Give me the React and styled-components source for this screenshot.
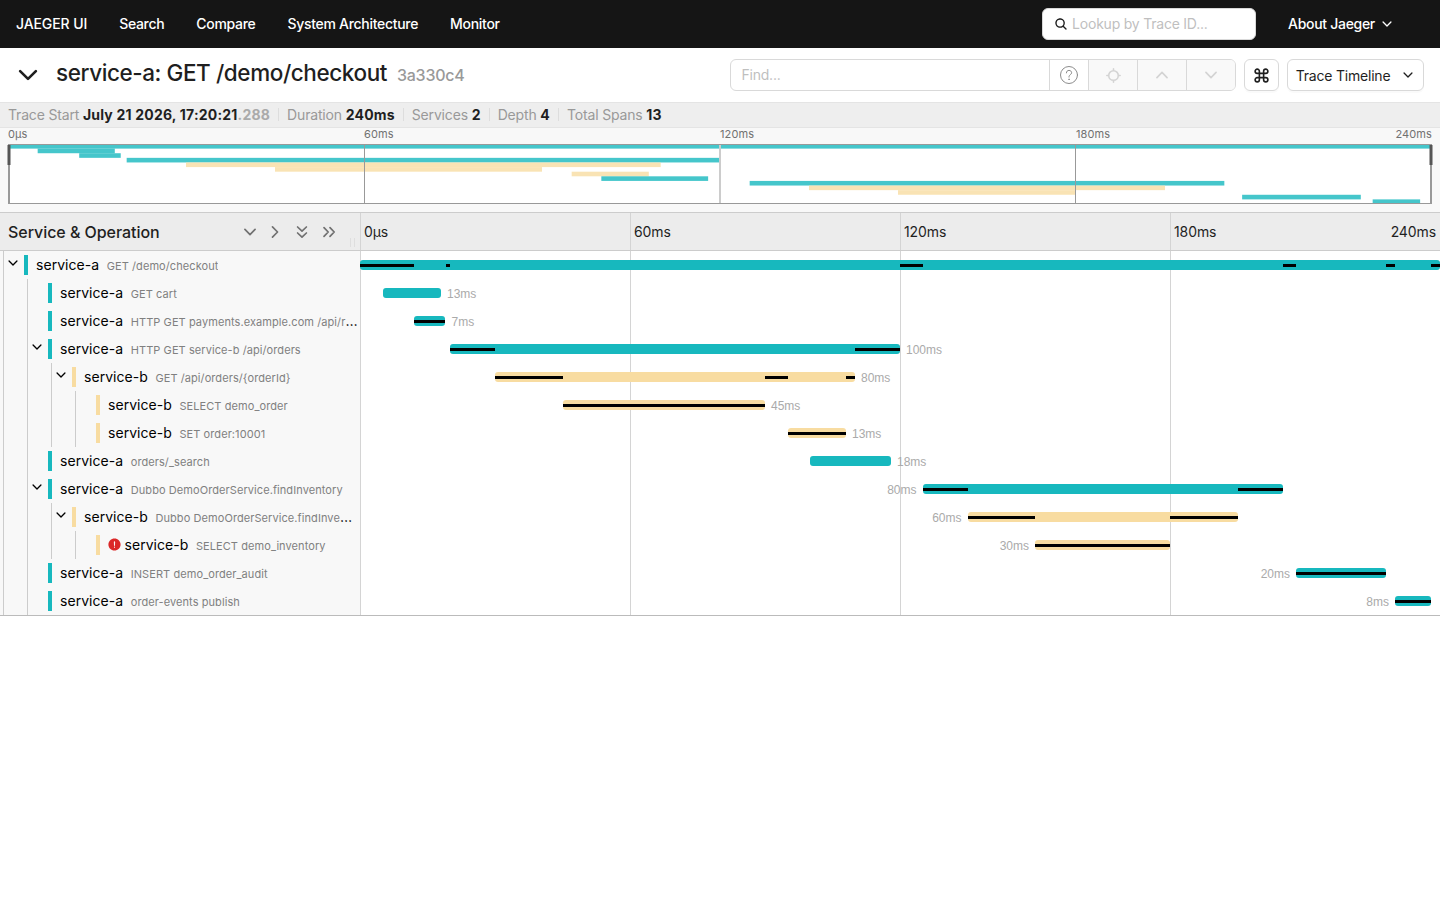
import React from "react";
import styled, { createGlobalStyle } from "styled-components";
import {
  IoAlertCircle,
  IoChevronDown,
  IoChevronForward,
  IoChevronUp,
  IoLocate,
  IoSearch,
} from "react-icons/io5";

const TOTAL = 240;
const TEAL = "#17b8be";
const SAND = "#f8dca1";

const spans = [
  { depth: 0, service: "service-a", op: "GET /demo/checkout", start: 0, end: 240, open: true, critical: [[0, 12], [19, 20], [120, 125], [205, 208], [228, 230], [238, 240]] },
  { depth: 1, service: "service-a", op: "GET cart", start: 5, end: 18, critical: [] },
  { depth: 1, service: "service-a", op: "HTTP GET payments.example.com /api/risk/check", start: 12, end: 19, critical: [[12, 19]] },
  { depth: 1, service: "service-a", op: "HTTP GET service-b /api/orders", start: 20, end: 120, open: true, critical: [[20, 30], [110, 120]] },
  { depth: 2, service: "service-b", op: "GET /api/orders/{orderId}", start: 30, end: 110, open: true, critical: [[30, 45], [90, 95], [108, 110]] },
  { depth: 3, service: "service-b", op: "SELECT demo_order", start: 45, end: 90, critical: [[45, 90]] },
  { depth: 3, service: "service-b", op: "SET order:10001", start: 95, end: 108, critical: [[95, 108]] },
  { depth: 1, service: "service-a", op: "orders/_search", start: 100, end: 118, critical: [] },
  { depth: 1, service: "service-a", op: "Dubbo DemoOrderService.findInventory", start: 125, end: 205, open: true, critical: [[125, 135], [195, 205]] },
  { depth: 2, service: "service-b", op: "Dubbo DemoOrderService.findInventory", start: 135, end: 195, open: true, critical: [[135, 150], [180, 195]] },
  { depth: 3, service: "service-b", op: "SELECT demo_inventory", start: 150, end: 180, error: true, critical: [[150, 180]] },
  { depth: 1, service: "service-a", op: "INSERT demo_order_audit", start: 208, end: 228, critical: [[208, 228]] },
  { depth: 1, service: "service-a", op: "order-events publish", start: 230, end: 238, critical: [[230, 238]] },
];

const colorOf = (span) => (span.service === "service-a" ? TEAL : SAND);
const pct = (ms) => `${(ms / TOTAL) * 100}%`;

const GlobalStyle = createGlobalStyle`
  * {
    box-sizing: border-box;
  }
  body {
    margin: 0;
    background: #fff;
    color: #1f1f1f;
    font-family: Inter, "Liberation Sans", sans-serif;
    font-size: 14px;
  }
  svg {
    display: block;
    flex: none;
  }
`;

const Nav = styled.nav`
  display: flex;
  align-items: center;
  height: 48px;
  padding: 0 46px 0 16px;
  gap: 32px;
  background: #151515;
  color: #fff;
  font-weight: 500;
`;

const NavItem = styled.span`
  display: flex;
  align-items: center;
  gap: 5px;
  padding-bottom: 1px;
  letter-spacing: ${(p) => (p.$brand ? -0.1 : -0.3)}px;
  white-space: nowrap;
`;

const Lookup = styled.div`
  display: flex;
  align-items: center;
  gap: 4px;
  width: 214px;
  height: 32px;
  margin-left: auto;
  padding: 0 11px;
  border: 1px solid #d9d9d9;
  border-radius: 6px;
  background: #fff;
  color: #1f1f1f;
`;

const Placeholder = styled.span`
  padding-bottom: 1px;
  color: #bfbfbf;
  font-weight: 400;
  letter-spacing: -0.22px;
`;

const TitleBar = styled.header`
  display: flex;
  align-items: center;
  height: 54px;
  padding: 0 16px 0 14px;
`;

const Title = styled.h1`
  display: flex;
  align-items: baseline;
  gap: 10px;
  flex: 1;
  margin: 0 0 2px 14px;
  font-size: 22.5px;
  line-height: 32px;
  font-weight: 500;
  letter-spacing: -0.42px;
`;

const TraceId = styled.small`
  color: #999;
  font-size: 16px;
  letter-spacing: -0.25px;
`;

const FindGroup = styled.div`
  display: flex;
  height: 32px;
  border: 1px solid #d9d9d9;
  border-radius: 6px;
  overflow: hidden;
`;

const FindInput = styled.div`
  display: flex;
  align-items: center;
  width: 318px;
  padding-left: 10.5px;
`;

const FindCell = styled.div`
  display: flex;
  align-items: center;
  justify-content: center;
  width: ${(p) => p.$width}px;
  border-left: 1px solid #d9d9d9;
  background: ${(p) => (p.$disabled ? "#f9f9f9" : "#fff")};
  color: ${(p) => (p.$disabled ? "#d4d4d4" : "#8c8c8c")};
`;

const Button = styled.div`
  display: flex;
  align-items: center;
  justify-content: center;
  gap: 11px;
  width: ${(p) => p.$width}px;
  height: 32px;
  margin-left: 8px;
  border: 1px solid #d9d9d9;
  border-radius: 6px;
  box-shadow: 0 2px 0 rgba(0, 0, 0, 0.02);
  letter-spacing: -0.2px;
  white-space: nowrap;
`;

const Summary = styled.div`
  display: flex;
  align-items: center;
  height: 26px;
  padding: 0 8px 1px;
  border-top: 1px solid #e4e4e4;
  border-bottom: 1px solid #e4e4e4;
  background: #eee;
  color: #999;
`;

const Fact = styled.div`
  display: flex;
  align-items: center;
  height: 13px;
  line-height: 13px;
  letter-spacing: -0.17px;
  white-space: pre;

  & + & {
    margin-left: 8px;
    padding-left: 8px;
    border-left: 1px solid #ddd;
  }

  b {
    color: #1f1f1f;
    font-weight: 700;
    letter-spacing: 0.2px;
  }
  i {
    color: #aaa;
    font-style: normal;
  }
`;

const Overview = styled.section`
  height: 84px;
  padding: 0 8px;
  background: #f8f8f8;
`;

const OverviewTicks = styled.div`
  display: grid;
  grid-template-columns: repeat(4, 1fr);
  height: 16px;
  color: #717171;
  font-size: 11px;
  line-height: 13px;
  letter-spacing: 0.1px;
`;

const OverviewTick = styled.span`
  display: flex;
  justify-content: space-between;
`;

const TimelineHeader = styled.div`
  display: grid;
  grid-template-columns: 360px 1fr;
  height: 39px;
  border-top: 1px solid #ccc;
  border-bottom: 1px solid #ccc;
  background: #ececec;
`;

const ColumnTitle = styled.div`
  display: flex;
  align-items: center;
  padding: 0 5px 0 8px;
  font-size: 16px;
  font-weight: 500;
  letter-spacing: -0.05px;
`;

const Collapsers = styled.div`
  display: flex;
  gap: 9px;
  margin: 0 12px 0 auto;
  color: #717171;

  svg:first-child {
    margin-right: -2px;
  }
`;

const Resizer = styled.div`
  align-self: flex-end;
  width: 5px;
  height: 9px;
  margin-bottom: 3px;
  border: solid #dedede;
  border-width: 0 1px;
`;

const Ticks = styled.div`
  display: grid;
  grid-template-columns: repeat(4, 1fr);
`;

const Tick = styled.div`
  display: flex;
  align-items: center;
  justify-content: space-between;
  padding: 0 4px 0 3px;
  border-left: 1px solid #d4d4d4;
  letter-spacing: -0.1px;
`;

const Rows = styled.div`
  border-bottom: 1px solid #bbb;
`;

const Row = styled.div`
  display: grid;
  grid-template-columns: 360px 1fr;
  height: 28px;
`;

const NameCell = styled.div`
  display: flex;
  min-width: 0;
  padding: 0 2px 0 3px;
  background: #f8f8f8;
`;

const Guide = styled.div`
  flex: none;
  width: ${(p) => (p.$last ? 21 : 24)}px;
  padding: 5px 0 0 2px;
  border-left: 1px solid #ccc;
  color: #000;
`;

const NameText = styled.div`
  flex: 0 1 auto;
  min-width: 0;
  height: 20px;
  margin-top: 4px;
  padding-left: 8px;
  border-left: 4px solid ${(p) => p.$color};
  overflow: hidden;
  text-overflow: ellipsis;
  white-space: nowrap;
  color: #000;
  font-size: 14px;
  line-height: 20px;
  letter-spacing: 0.05px;

  small {
    margin-left: 7.5px;
    color: #808080;
    font-size: 11px;
    letter-spacing: 0.08px;
  }
`;

const ErrorIcon = styled(IoAlertCircle)`
  display: inline-block;
  margin: 0 3px 0 -1.5px;
  vertical-align: -1.5px;
  color: #db2828;
`;

const Track = styled.div`
  display: grid;
  grid-template-columns: repeat(4, 1fr);
  position: relative;
`;

const TrackCell = styled.div`
  border-left: 1px solid #d4d4d4;
`;

const Bar = styled.div`
  position: absolute;
  top: 9px;
  height: 10px;
  border-radius: 3px;
  background: ${(p) => p.$color};
`;

const Critical = styled.div`
  position: absolute;
  top: 13px;
  height: 3px;
  background: #000;
`;

const Duration = styled.span`
  position: absolute;
  top: -1px;
  ${(p) => (p.$before ? "right" : "left")}: calc(100% + 6px);
  color: #aaa;
  font-family: "Liberation Sans", sans-serif;
  font-size: 12px;
  line-height: 14px;
`;

const HelpIcon = () => (
  <svg width="18" height="18" fill="none" stroke="currentColor" strokeLinecap="round">
    <circle cx="9" cy="9" r="8.5" />
    <path d="M6.4 6.9c0-1.6 1.1-2.5 2.6-2.5s2.6 1 2.6 2.3c0 2-2.6 2.1-2.6 4v.4" />
    <circle cx="9" cy="13.3" r="0.3" />
  </svg>
);

const CommandIcon = () => (
  <svg width="17" height="17" viewBox="0 0 24 24" fill="none" stroke="currentColor" strokeWidth="2.3">
    <path d="M15 6v12a3 3 0 1 0 3-3H6a3 3 0 1 0 3 3V6a3 3 0 1 0-3 3h12a3 3 0 1 0-3-3" />
  </svg>
);

// points down by default, right when turned
const DoubleChevron = ({ turned }) => (
  <svg width="18" height="18" fill="none" stroke="currentColor" strokeWidth="1.7" strokeLinecap="round" strokeLinejoin="round">
    <path
      d="M4.6 4l4.4 4.2L13.4 4M4.6 10l4.4 4.2 4.4-4.2"
      transform={turned ? "rotate(-90 9 9)" : undefined}
    />
  </svg>
);

const Minimap = () => (
  <svg width="1424" height="60" overflow="visible">
    <rect width="1424" height="60" fill="#fff" />
    {spans.map((s, i) => (
      <rect
        key={i}
        x={(s.start / TOTAL) * 1424}
        y={(i * 60) / 13}
        width={((s.end - s.start) / TOTAL) * 1424}
        height={60 / 13}
        fill={colorOf(s)}
        opacity="0.8"
      />
    ))}
    <path d="M356.5 0V60M1067.5 0V60" stroke="#999" />
    <path d="M712 0V60" stroke="#ccc" strokeWidth="2" />
    <path d="M0 0.5H1424M0 59.5H1424" stroke="#999" />
    <path d="M1 0V60M1423 0V60" stroke="#999" strokeWidth="2" />
    <path d="M1 1V21M1423 1V21" stroke="#555" strokeWidth="3" />
  </svg>
);

const SpanRow = ({ span }) => {
  const { depth, service, op, start, end, open, error, critical } = span;
  const before = start > TOTAL - end;

  return (
    <Row>
      <NameCell>
        {Array.from({ length: depth + 1 }, (_, i) => (
          <Guide key={i} $last={i === depth}>
            {i === depth && open && <IoChevronDown size={14} />}
          </Guide>
        ))}
        <NameText $color={colorOf(span)}>
          {error && <ErrorIcon size={15} />}
          {service}
          <small>{op}</small>
        </NameText>
      </NameCell>
      <Track>
        <TrackCell />
        <TrackCell />
        <TrackCell />
        <TrackCell />
        <Bar $color={colorOf(span)} style={{ left: pct(start), width: pct(end - start) }}>
          {depth > 0 && <Duration $before={before}>{end - start}ms</Duration>}
        </Bar>
        {critical.map(([from, to]) => (
          <Critical key={from} style={{ left: pct(from), width: pct(to - from) }} />
        ))}
      </Track>
    </Row>
  );
};

const App = () => (
  <>
    <GlobalStyle />
    <Nav>
      <NavItem $brand>JAEGER UI</NavItem>
      <NavItem>Search</NavItem>
      <NavItem>Compare</NavItem>
      <NavItem>System Architecture</NavItem>
      <NavItem>Monitor</NavItem>
      <Lookup>
        <IoSearch size={14} />
        <Placeholder>Lookup by Trace ID...</Placeholder>
      </Lookup>
      <NavItem>
        About Jaeger <IoChevronDown size={14} />
      </NavItem>
    </Nav>
    <TitleBar>
      <IoChevronDown size={28} />
      <Title>
        service-a: GET /demo/checkout <TraceId>3a330c4</TraceId>
      </Title>
      <FindGroup>
        <FindInput>
          <Placeholder>Find...</Placeholder>
        </FindInput>
        <FindCell $width={39}>
          <HelpIcon />
        </FindCell>
        <FindCell $width={49} $disabled>
          <IoLocate size={17} />
        </FindCell>
        <FindCell $width={49} $disabled>
          <IoChevronUp size={18} />
        </FindCell>
        <FindCell $width={49} $disabled>
          <IoChevronDown size={18} />
        </FindCell>
      </FindGroup>
      <Button $width={35}>
        <CommandIcon />
      </Button>
      <Button $width={137}>
        Trace Timeline <IoChevronDown size={14} />
      </Button>
    </TitleBar>
    <Summary>
      <Fact>
        Trace Start <b>July 21 2026, 17:20:21<i>.288</i></b>
      </Fact>
      <Fact>
        Duration <b>240ms</b>
      </Fact>
      <Fact>
        Services <b>2</b>
      </Fact>
      <Fact>
        Depth <b>4</b>
      </Fact>
      <Fact>
        Total Spans <b>13</b>
      </Fact>
    </Summary>
    <Overview>
      <OverviewTicks>
        <OverviewTick>0μs</OverviewTick>
        <OverviewTick>60ms</OverviewTick>
        <OverviewTick>120ms</OverviewTick>
        <OverviewTick>
          <span>180ms</span>
          <span>240ms</span>
        </OverviewTick>
      </OverviewTicks>
      <Minimap />
    </Overview>
    <TimelineHeader>
      <ColumnTitle>
        Service &amp; Operation
        <Collapsers>
          <IoChevronDown size={18} />
          <IoChevronForward size={18} />
          <DoubleChevron />
          <DoubleChevron turned />
        </Collapsers>
        <Resizer />
      </ColumnTitle>
      <Ticks>
        <Tick>0μs</Tick>
        <Tick>60ms</Tick>
        <Tick>120ms</Tick>
        <Tick>
          <span>180ms</span>
          <span>240ms</span>
        </Tick>
      </Ticks>
    </TimelineHeader>
    <Rows>
      {spans.map((span, i) => (
        <SpanRow key={i} span={span} />
      ))}
    </Rows>
  </>
);

export default App;
